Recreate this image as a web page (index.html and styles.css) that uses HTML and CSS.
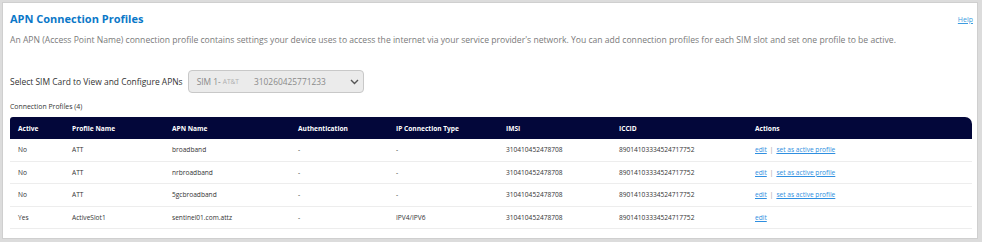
FILE: index.html
```html
<!DOCTYPE html>
<html lang="en">
<head>
    <meta charset="UTF-8">
    <title>APN Connection Profiles</title>
    <link rel="stylesheet" href="styles.css">
</head>
<body>
    <div class="panel">
        <div class="panel-head">
            <h1>APN Connection Profiles</h1>
            <a class="help" href="#">Help</a>
        </div>
        <p class="intro">An APN (Access Point Name) connection profile contains settings your device uses to access the internet via your service provider's network. You can add connection profiles for each SIM slot and set one profile to be active.</p>

        <div class="sim-row">
            <label>Select SIM Card to View and Configure APNs</label>
            <div class="sim-select">
                <span class="sim-slot">SIM 1-</span>
                <span class="sim-carrier">AT&amp;T</span>
                <span class="sim-number">310260425771233</span>
                <svg class="chevron" width="9" height="6" viewBox="0 0 9 6">
                    <path d="M1 1l3.5 3.5L8 1" fill="none" stroke="#555" stroke-width="1.4"/>
                </svg>
            </div>
        </div>

        <div class="table-title">Connection Profiles (4)</div>
        <table class="profiles">
            <thead>
                <tr>
                    <th class="c-active">Active</th>
                    <th class="c-name">Profile Name</th>
                    <th class="c-apn">APN Name</th>
                    <th class="c-auth">Authentication</th>
                    <th class="c-ip">IP Connection Type</th>
                    <th class="c-imsi">IMSI</th>
                    <th class="c-iccid">ICCID</th>
                    <th class="c-actions">Actions</th>
                </tr>
            </thead>
            <tbody>
                <tr>
                    <td>No</td>
                    <td>ATT</td>
                    <td>broadband</td>
                    <td>-</td>
                    <td>-</td>
                    <td>310410452478708</td>
                    <td>89014103334524717752</td>
                    <td><a href="#">edit</a><span class="sep">|</span><a href="#">set as active profile</a></td>
                </tr>
                <tr>
                    <td>No</td>
                    <td>ATT</td>
                    <td>nrbroadband</td>
                    <td>-</td>
                    <td>-</td>
                    <td>310410452478708</td>
                    <td>89014103334524717752</td>
                    <td><a href="#">edit</a><span class="sep">|</span><a href="#">set as active profile</a></td>
                </tr>
                <tr>
                    <td>No</td>
                    <td>ATT</td>
                    <td>5gcbroadband</td>
                    <td>-</td>
                    <td>-</td>
                    <td>310410452478708</td>
                    <td>89014103334524717752</td>
                    <td><a href="#">edit</a><span class="sep">|</span><a href="#">set as active profile</a></td>
                </tr>
                <tr>
                    <td>Yes</td>
                    <td>ActiveSlot1</td>
                    <td>sentinel01.com.attz</td>
                    <td>-</td>
                    <td>IPV4/IPV6</td>
                    <td>310410452478708</td>
                    <td>89014103334524717752</td>
                    <td><a href="#">edit</a></td>
                </tr>
            </tbody>
        </table>
    </div>
</body>
</html>
```

FILE: styles.css
```css
* {
    margin: 0;
    padding: 0;
    box-sizing: border-box;
}

body {
    font-family: 'Open Sans', 'Liberation Sans', sans-serif;
    background: #dcdcdc;
    color: #333;
    padding: 2px 4px 3px 2px;
}

.panel {
    background: #fff;
    border: 1px solid #cfcfcf;
    height: 237px;
    padding: 0 4px 0 7px;
}

.panel-head {
    display: flex;
    justify-content: space-between;
    align-items: center;
    padding-top: 5px;
    height: 26px;
}

.panel-head h1 {
    font-size: 11px;
    font-weight: 700;
    color: #0b78c8;
}

.help {
    font-size: 7px;
    color: #3d9be0;
    margin-top: 2px;
}

.intro {
    font-size: 8.6px;
    color: #7a7a7a;
    margin-top: 5px;
    line-height: 13px;
}

.sim-row {
    display: flex;
    align-items: center;
    margin-top: 23px;
    gap: 5px;
}

.sim-row label {
    font-size: 8.45px;
    color: #333;
}

.sim-select {
    display: flex;
    align-items: center;
    width: 176px;
    height: 23px;
    background: #ebebeb;
    border: 1px solid #c8c8c8;
    border-radius: 4px;
    padding: 0 4px 0 8px;
}

.sim-slot {
    font-size: 8.4px;
    color: #8a8a8a;
}

.sim-carrier {
    font-size: 6.6px;
    color: #b0b0b0;
    margin-left: 2px;
}

.sim-number {
    font-size: 8.4px;
    color: #8a8a8a;
    margin-left: 15px;
}

.chevron {
    margin-left: auto;
}

.table-title {
    font-size: 6.9px;
    color: #333;
    margin-top: 8px;
    line-height: 12px;
}

.profiles {
    width: 962px;
    border-collapse: separate;
    border-spacing: 0;
    table-layout: fixed;
    margin-top: 4px;
}

.profiles th {
    background: #03073a;
    color: #fff;
    font-size: 6.6px;
    font-weight: 700;
    text-align: left;
    height: 22px;
    padding-left: 8px;
}

.profiles th:first-child {
    border-top-left-radius: 3px;
}

.profiles th:last-child {
    border-top-right-radius: 7px;
}

.profiles td {
    font-size: 6.6px;
    color: #333;
    height: 22.5px;
    padding-left: 8px;
    border-bottom: 1px solid #ededed;
    white-space: nowrap;
}

.profiles td a {
    color: #2f8fe0;
}

.sep {
    color: #999;
    margin: 0 3px;
}

.c-active { width: 54px; }
.c-name { width: 100px; }
.c-apn { width: 126px; }
.c-auth { width: 98px; }
.c-ip { width: 110px; }
.c-imsi { width: 113px; }
.c-iccid { width: 136px; }
.c-actions { width: 225px; }
```
